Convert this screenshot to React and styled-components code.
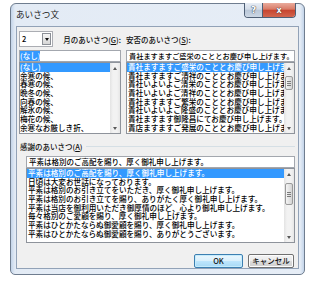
import React from 'react';
import styled, { createGlobalStyle } from 'styled-components';

const uiFont = `"Noto Sans CJK JP", "Noto Sans", sans-serif`;

const GlobalStyle = createGlobalStyle`
  html, body {
    margin: 0;
    padding: 0;
    background: #ffffff;
  }
  body {
    font-family: ${uiFont};
    font-weight: 500;
    color: #000;
  }
`;

const Window = styled.div`
  box-sizing: border-box;
  margin: 3px 0 0 10px;
  width: 295px;
  height: 272px;
  border: 1px solid #6f7d8f;
  border-radius: 6px 6px 5px 5px;
  background: linear-gradient(90deg, #c3d4e9 0, #e3ebf5 4px, #e6edf6 calc(100% - 4px), #c3d4e9 100%);
  padding: 0 6px 6px;
  display: flex;
  flex-direction: column;
`;

const TitleBar = styled.div`
  height: 23px;
  display: flex;
  align-items: flex-start;
  justify-content: space-between;
  flex: none;
`;

const Title = styled.div`
  margin: 5px 0 0 -1px;
  font-size: 8.6px;
  line-height: 10px;
  font-weight: 400;
  color: #1b1b1b;
`;

const CaptionGroup = styled.div`
  display: flex;
  margin: -1px 2px 0 0;
  height: 14px;
  border: 1px solid #4e5f75;
  border-top: none;
  border-radius: 0 0 4px 4px;
  overflow: hidden;
`;

const CaptionButton = styled.div`
  width: ${p => p.$w}px;
  height: 100%;
  display: flex;
  align-items: center;
  justify-content: center;
  font-family: "DejaVu Sans", sans-serif;
  font-weight: bold;
  font-size: ${p => p.$fs}px;
  color: #fff;
  text-shadow: 0 0 1px #2a3340, 0 0 1px #2a3340;
  background: ${p => p.$close
    ? 'linear-gradient(180deg, #e9ab9c 0%, #d97a66 45%, #c7442e 50%, #d2654e 100%)'
    : 'linear-gradient(180deg, #e7edf5 0%, #d3dce8 45%, #b9c7d8 50%, #ccd7e4 100%)'};
  & + & {
    border-left: 1px solid #4e5f75;
  }
`;

const Client = styled.div`
  flex: 1;
  background: #f0f0f0;
  box-shadow: 0 0 0 1px #92a2b7;
  padding: 4px 3px 0 2px;
  display: flex;
  flex-direction: column;
`;

const TopGrid = styled.div`
  display: grid;
  grid-template-columns: 102px 169px;
  column-gap: 5px;
  row-gap: 3px;
`;

const HeadCell = styled.div`
  height: 16px;
  display: flex;
  align-items: center;
`;

const Label = styled.span`
  font-size: 7.5px;
  line-height: 9px;
  white-space: nowrap;
  margin-left: ${p => p.$indent || 0}px;
  color: #111;
`;

const Combo = styled.div`
  box-sizing: border-box;
  width: 37px;
  height: 16px;
  border: 1px solid #abadb3;
  background: #fff;
  display: flex;
  align-items: stretch;
`;

const ComboText = styled.div`
  flex: 1;
  font-size: 7.5px;
  line-height: 14px;
  padding-left: 2px;
`;

const DropButton = styled.div`
  box-sizing: border-box;
  width: 9px;
  margin: 1px;
  border: 1px solid #8b8f96;
  background: linear-gradient(180deg, #f6f6f6 0%, #e6e6e6 50%, #d6d6d6 100%);
  display: flex;
  align-items: center;
  justify-content: center;
  &::after {
    content: '';
    border-left: 2.5px solid transparent;
    border-right: 2.5px solid transparent;
    border-top: 3px solid #111;
  }
`;

const SimpleCombo = styled.div`
  display: flex;
  flex-direction: column;
  margin-left: ${p => p.$indent || 0}px;
  margin-top: ${p => p.$top || 0}px;
`;

const Edit = styled.div`
  box-sizing: border-box;
  height: 12px;
  border: 1px solid #a3a7ae;
  background: #fff;
  padding: 0 ${p => p.$pad ?? 2}px;
  font-size: ${p => p.$fs || 7.5}px;
  line-height: 10px;
  white-space: nowrap;
  overflow: hidden;
`;

const Highlight = styled.span`
  background: #3399ff;
  color: #fff;
`;

const List = styled.div`
  box-sizing: border-box;
  height: ${p => p.$h}px;
  border: 1px solid #8e939b;
  background: #fff;
  display: flex;
`;

const Items = styled.div`
  flex: 1;
  min-width: 0;
  overflow: hidden;
`;

const Item = styled.div`
  height: 8.7px;
  line-height: 8.7px;
  font-size: 7.6px;
  white-space: nowrap;
  overflow: hidden;
  padding-left: ${p => p.$pad ?? 1}px;
  background: ${p => (p.$selected ? '#3399ff' : 'transparent')};
  color: ${p => (p.$selected ? '#fff' : '#000')};
`;

const ScrollBar = styled.div`
  width: 10px;
  flex: none;
  display: flex;
  flex-direction: column;
  background: linear-gradient(90deg, #e3e3e3 0%, #f2f2f2 30%, #f2f2f2 70%, #e6e6e6 100%);
`;

const Arrow = styled.div`
  height: 10px;
  flex: none;
  display: flex;
  align-items: center;
  justify-content: center;
  &::after {
    content: '';
    border-left: 2.5px solid transparent;
    border-right: 2.5px solid transparent;
    ${p => (p.$down ? 'border-top: 3px solid #5a5a5a;' : 'border-bottom: 3px solid #5a5a5a;')}
  }
`;

const Track = styled.div`
  flex: 1;
  padding-top: ${p => p.$top || 0}px;
`;

const Thumb = styled.div`
  box-sizing: border-box;
  height: ${p => p.$h}px;
  margin: 0 1px;
  border: 1px solid #9a9a9a;
  border-radius: 2px;
  background: linear-gradient(90deg, #f4f4f4 0%, #e4e4e4 50%, #d4d4d4 100%);
  display: flex;
  align-items: center;
  justify-content: center;
  &::after {
    content: '';
    width: 4px;
    height: 5px;
    background: repeating-linear-gradient(180deg, #7a7a7a 0 1px, transparent 1px 2px);
  }
`;

const GroupHead = styled.div`
  display: flex;
  align-items: center;
  margin: 8px 0 0 1px;
  height: 9px;
  &::after {
    content: '';
    flex: 1;
    margin-left: 3px;
    border-top: 1px solid #d5dfe5;
  }
`;

const ButtonRow = styled.div`
  display: flex;
  justify-content: flex-end;
  gap: 5px;
  margin: 11px 1px 0 0;
`;

const PushButton = styled.div`
  box-sizing: border-box;
  width: ${p => p.$w}px;
  height: 14px;
  border: 1px solid ${p => (p.$default ? '#3c7fb1' : '#707070')};
  border-radius: 2px;
  background: ${p => (p.$default
    ? 'linear-gradient(180deg, #eaf6fd 0%, #d9f0fc 50%, #bee6fd 51%, #a7d9f5 100%)'
    : 'linear-gradient(180deg, #f2f2f2 0%, #ebebeb 50%, #dddddd 51%, #cfcfcf 100%)')};
  box-shadow: inset 0 0 0 1px ${p => (p.$default ? '#c6ecfc' : '#fcfcfc')};
  display: flex;
  align-items: center;
  justify-content: center;
  font-size: 7.5px;
  line-height: 1;
  color: #111;
`;

const monthItems = ['(なし)', '余寒の候、', '春寒の候、', '晩冬の候、', '向春の候、', '解氷の候、', '梅花の候、', '余寒なお厳しき折、'];

const healthItems = [
  '貴社ますますご盛栄のこととお慶び申し上げます。',
  '貴社ますますご清祥のこととお慶び申し上げます。',
  '貴社いよいよご清栄のこととお慶び申し上げます。',
  '貴社いよいよご清祥のこととお慶び申し上げます。',
  '貴社ますますご繁栄のこととお慶び申し上げます。',
  '貴社いよいよご隆盛のこととお慶び申し上げます。',
  '貴社ますます御隆昌にてお慶び申し上げます。',
  '貴店ますますご発展のこととお慶び申し上げます。',
];

const thanksItems = [
  '平素は格別のご高配を賜り、厚く御礼申し上げます。',
  '日頃は大変お世話になっております。',
  '平素は格別のお引き立てをいただき、厚く御礼申し上げます。',
  '平素は格別のお引き立てを賜り、ありがたく厚く御礼申し上げます。',
  '平素は当店を御利用いただき御厚情のほど、心より御礼申し上げます。',
  '毎々格別のご愛顧を賜り、厚く御礼申し上げます。',
  '平素はひとかたならぬ御愛顧を賜り、厚く御礼申し上げます。',
  '平素はひとかたならぬ御愛顧を賜り、ありがとうございます。',
];

function ListBox({ items, height, thumb, pad }) {
  return (
    <List $h={height}>
      <Items>
        {items.map((t, i) => (
          <Item key={i} $selected={i === 0} $pad={pad}>{t}</Item>
        ))}
      </Items>
      <ScrollBar>
        <Arrow />
        <Track $top={thumb ? thumb.top : 0}>
          {thumb && <Thumb $h={thumb.h} />}
        </Track>
        <Arrow $down />
      </ScrollBar>
    </List>
  );
}

export default function App() {
  return (
    <>
      <GlobalStyle />
      <Window>
        <TitleBar>
          <Title>あいさつ文</Title>
          <CaptionGroup>
            <CaptionButton $w={17} $fs={9}>?</CaptionButton>
            <CaptionButton $w={32} $fs={8} $close>x</CaptionButton>
          </CaptionGroup>
        </TitleBar>
        <Client>
          <TopGrid>
            <HeadCell>
              <Combo>
                <ComboText>2</ComboText>
                <DropButton />
              </Combo>
              <Label $indent={10}>月のあいさつ(<u>G</u>):</Label>
            </HeadCell>
            <HeadCell>
              <Label>安否のあいさつ(<u>S</u>):</Label>
            </HeadCell>
            <SimpleCombo>
              <Edit $pad={0}><Highlight>(なし)</Highlight></Edit>
              <ListBox items={monthItems} height={72} pad={0} />
            </SimpleCombo>
            <SimpleCombo>
              <Edit $fs={7.2}>{healthItems[0]}</Edit>
              <ListBox items={healthItems} height={72} thumb={{ top: 3, h: 14 }} />
            </SimpleCombo>
          </TopGrid>
          <GroupHead>
            <Label>感謝のあいさつ(<u>A</u>)</Label>
          </GroupHead>
          <SimpleCombo $indent={7} $top={5}>
            <Edit>{thanksItems[0]}</Edit>
            <ListBox items={thanksItems} height={75} thumb={{ top: 4, h: 22 }} />
          </SimpleCombo>
          <ButtonRow>
            <PushButton $w={49} $default>OK</PushButton>
            <PushButton $w={46}>キャンセル</PushButton>
          </ButtonRow>
        </Client>
      </Window>
    </>
  );
}
